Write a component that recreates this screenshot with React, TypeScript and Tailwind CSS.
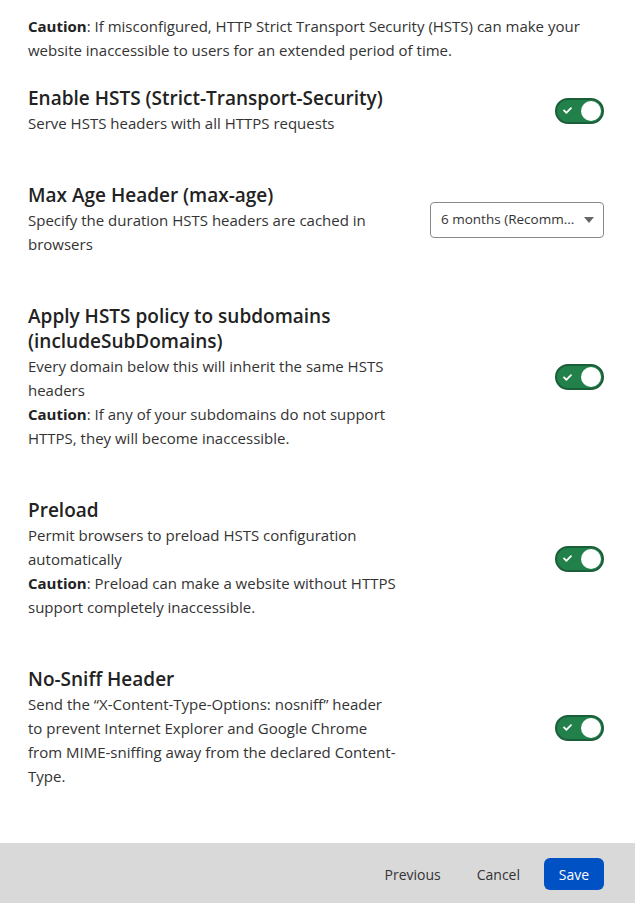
import { FaCheck } from 'react-icons/fa';

function Toggle() {
  return (
    <div className="flex h-[26px] w-[49px] shrink-0 items-center justify-between rounded-full border-2 border-[#1b5e3a] bg-[#22804a] pl-[6px] pr-[1px]">
      <FaCheck className="h-[9px] w-[9px] text-white" />
      <span className="h-[20px] w-[20px] rounded-full bg-white" />
    </div>
  );
}

function Select() {
  return (
    <div className="flex h-[36px] w-[174px] shrink-0 items-center justify-between rounded-[4px] border border-[#8a8a8a] bg-white pl-[10px] pr-[9px] text-[13.5px] text-[#333]">
      <span>6 months (Recomm...</span>
      <span className="h-0 w-0 border-x-[5px] border-t-[6px] border-x-transparent border-t-[#666]" />
    </div>
  );
}

interface SectionProps {
  title: React.ReactNode;
  children: React.ReactNode;
  control: React.ReactNode;
}

function Section({ title, children, control }: SectionProps) {
  return (
    <div className="flex items-center justify-between">
      <div className="w-[376px]">
        <h2 className="text-[19px] font-semibold leading-[25px] text-[#222]">{title}</h2>
        <div className="text-[15px] leading-[24px] text-[#333]">{children}</div>
      </div>
      {control}
    </div>
  );
}

export default function App() {
  return (
    <div className="flex h-[903px] w-[635px] flex-col bg-white font-['Open_Sans',sans-serif]">
      <div className="flex flex-1 flex-col gap-[48px] pl-[28px] pr-[31px] pt-[14px]">
        <p className="-mb-[24px] text-[15px] leading-[24px] text-[#333]">
          <b className="font-bold text-[#222]">Caution</b>: If misconfigured, HTTP Strict Transport Security (HSTS) can make your
          website inaccessible to users for an extended period of time.
        </p>
        <Section title="Enable HSTS (Strict-Transport-Security)" control={<Toggle />}>
          Serve HSTS headers with all HTTPS requests
        </Section>
        <Section title="Max Age Header (max-age)" control={<Select />}>
          Specify the duration HSTS headers are cached in browsers
        </Section>
        <Section
          title={
            <>
              Apply HSTS policy to subdomains
              <br />
              (includeSubDomains)
            </>
          }
          control={<Toggle />}
        >
          <p>Every domain below this will inherit the same HSTS headers</p>
          <p>
            <b className="font-bold text-[#222]">Caution</b>: If any of your subdomains do not support HTTPS, they will
            become inaccessible.
          </p>
        </Section>
        <Section title="Preload" control={<Toggle />}>
          <p>Permit browsers to preload HSTS configuration automatically</p>
          <p>
            <b className="font-bold text-[#222]">Caution</b>: Preload can make a website without HTTPS support
            completely inaccessible.
          </p>
        </Section>
        <Section title="No-Sniff Header" control={<Toggle />}>
          Send the “X-Content-Type-Options: nosniff” header
          <br />
          to prevent Internet Explorer and Google Chrome
          <br />
          from MIME-sniffing away from the declared Content-
          <br />
          Type.
        </Section>
      </div>
      <div className="flex h-[60px] items-center justify-end gap-[8px] bg-[#d9d9d9] pr-[31px] pt-[2px] text-[14px] text-[#333]">
        <button type="button" className="px-[14px] py-[6px]">
          Previous
        </button>
        <button type="button" className="px-[14px] py-[6px]">
          Cancel
        </button>
        <button type="button" className="ml-[2px] h-[32px] w-[60px] rounded-[6px] bg-[#0051c3] text-white">
          Save
        </button>
      </div>
    </div>
  );
}
